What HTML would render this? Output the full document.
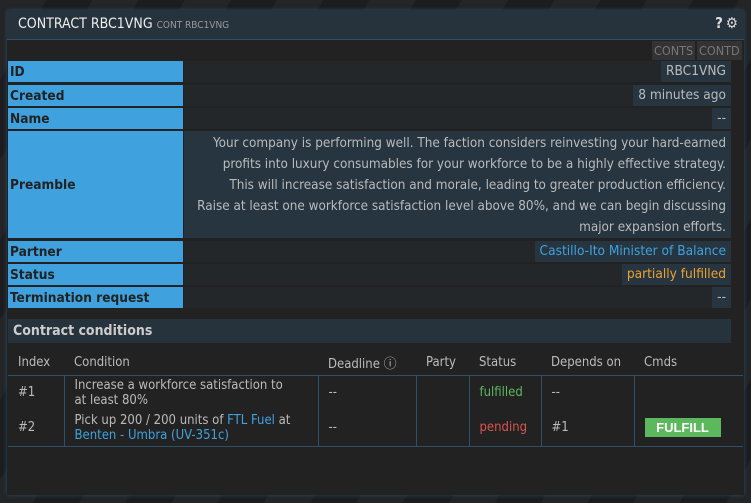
<!DOCTYPE html>
<html><head><meta charset="utf-8"><style>
*{box-sizing:border-box;margin:0;padding:0}
body{width:751px;height:503px;overflow:hidden;background:#1c1e20;font-family:"DejaVu Sans","Liberation Sans",sans-serif;font-stretch:condensed;font-size:13.6px;color:#bbb;position:relative}
.bg{position:absolute;inset:0;background:repeating-linear-gradient(120deg,#232527 0 40px,#1b1d1f 40px 80px)}
.panel{position:absolute;left:7px;top:10px;width:737px;height:485px;background:#222;box-shadow:0 0 4px #2d4b5e}
.hdr{height:30px;background:#27333c;border-bottom:1px solid #2e5068;padding:6px 0 0 11px;color:#eee;font-size:14px}
.hdr small{font-size:10px;color:#999}
.icons{position:absolute;right:3px;top:4px;color:#ddd;font-weight:bold;font-size:15px;letter-spacing:3px}
.tb{height:21px;position:relative}
.btn{position:absolute;top:1px;height:19px;background:#333;color:#777;font-size:12.5px;line-height:19px;padding:0 2px}
.row{position:absolute;left:1px;width:723px;display:flex}
.lab{width:175px;background:#3fa2de;color:#222;font-weight:bold;font-size:13.6px;padding-left:2px;display:flex;align-items:center}
.val{flex:1;background:#23272a;margin-left:1px;position:relative}
.v{position:absolute;right:0;top:0;bottom:0;background:#263540;padding:0 5px;line-height:21px;color:#bbb}
.pre{flex:1;margin-left:1px;background:#263540;text-align:right;padding:2px 5px 2px 0;line-height:21px;color:#bbb;font-size:13.4px;white-space:nowrap;overflow:hidden}
.ch{position:absolute;left:1px;top:309px;width:723px;height:24px;background:#27333c;color:#ccc;font-weight:bold;padding:4px 5px;font-size:14px}
table{position:absolute;left:1px;top:340px;width:735px;border-collapse:collapse;font-size:13px}
th{font-weight:normal;text-align:left;color:#bbb;padding:3px 10px;height:24px;border-bottom:1px solid #2e5068;white-space:nowrap}
td{padding:0 10px;border-left:1px solid #2e5068;line-height:15px;color:#bbb;white-space:nowrap}
td:first-child{border-left:none}
tr.last td{border-bottom:1px solid #2e5068}
a{color:#3fa2de}
.ff{background:#5cb85c;color:#fff;font-weight:bold;font-family:"Liberation Sans",sans-serif;padding:2px 0;text-align:center;width:76px;font-size:13px}
</style></head><body><div class="bg"></div>
<div class="panel">
<div class="hdr">CONTRACT RBC1VNG <small>CONT RBC1VNG</small><span class="icons">?⚙</span></div>
<div class="tb"><span class="btn" style="left:645px">CONTS</span><span class="btn" style="left:690px">CONTD</span></div>
<div class="row" style="top:51px;height:21px"><div class="lab">ID</div><div class="val"><span class="v">RBC1VNG</span></div></div>
<div class="row" style="top:75px;height:21px"><div class="lab">Created</div><div class="val"><span class="v">8 minutes ago</span></div></div>
<div class="row" style="top:98px;height:21px"><div class="lab">Name</div><div class="val"><span class="v">--</span></div></div>
<div class="row" style="top:121px;height:107px"><div class="lab">Preamble</div><div class="pre">Your company is performing well. The faction considers reinvesting your hard-earned<br>profits into luxury consumables for your workforce to be a highly effective strategy.<br>This will increase satisfaction and morale, leading to greater production efficiency.<br>Raise at least one workforce satisfaction level above 80%, and we can begin discussing<br>major expansion efforts.</div></div>
<div class="row" style="top:231px;height:21px"><div class="lab">Partner</div><div class="val"><span class="v" style="color:#3fa2de">Castillo-Ito Minister of Balance</span></div></div>
<div class="row" style="top:254px;height:21px"><div class="lab">Status</div><div class="val"><span class="v" style="color:#f0a030">partially fulfilled</span></div></div>
<div class="row" style="top:277px;height:21px"><div class="lab">Termination request</div><div class="val"><span class="v">--</span></div></div>
<div class="ch">Contract conditions</div>
<table>
<tr><th style="width:56px">Index</th><th style="width:254px">Condition</th><th style="width:98px">Deadline ⓘ</th><th style="width:53px">Party</th><th style="width:72px">Status</th><th style="width:93px">Depends on</th><th>Cmds</th></tr>
<tr style="height:34px"><td>#1</td><td>Increase a workforce satisfaction to<br>at least 80%</td><td>--</td><td></td><td style="color:#5cb85c">fulfilled</td><td>--</td><td></td></tr>
<tr class="last" style="height:37px"><td>#2</td><td>Pick up 200 / 200 units of <a>FTL Fuel</a> at<br><a>Benten - Umbra (UV-351c)</a></td><td>--</td><td></td><td style="color:#d9534f">pending</td><td>#1</td><td><div class="ff">FULFILL</div></td></tr>
</table>
</div>
</body></html>
